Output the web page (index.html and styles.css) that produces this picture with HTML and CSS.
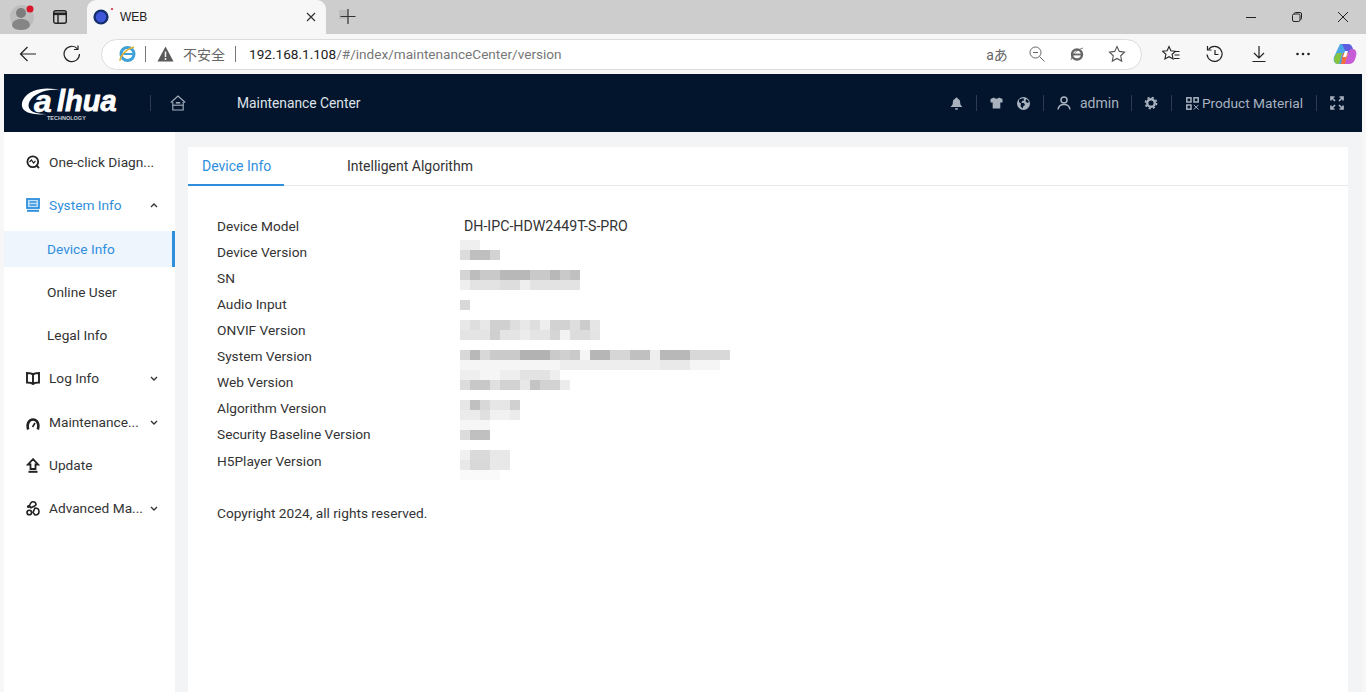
FILE: index.html
```html
<!DOCTYPE html>
<html lang="en">
<head>
<meta charset="utf-8">
<title>WEB</title>
<link rel="stylesheet" href="styles.css">
</head>
<body>
<div class="tabstrip">
  <div class="strip-btn profile">
    <svg width="30" height="30" viewBox="0 0 30 30"><circle cx="15" cy="15" r="12" fill="#bdbdbd"/><circle cx="14" cy="11" r="5" fill="#7d7d7d"/><path d="M5 24c0-5 4-7 9-7s9 2 9 7c-2 3-5 4-9 4s-7-1-9-4z" fill="#858585"/><circle cx="23" cy="7" r="3.5" fill="#d8152a"/></svg>
  </div>
  <div class="strip-btn tabs-btn">
    <svg width="16" height="16" viewBox="0 0 16 16" fill="none" stroke="#222" stroke-width="1.4"><rect x="1.7" y="1.7" width="12.6" height="12.6" rx="2"/><path d="M1.7 4.8h12.6" stroke-width="2.6"/><path d="M6 5v9"/></svg>
  </div>
  <div class="tab">
    <svg class="favicon" width="16" height="16" viewBox="0 0 16 16"><circle cx="8" cy="8" r="6.4" fill="#3f56d8" stroke="#14306e" stroke-width="2.4"/></svg>
    <i class="fav-dot"></i>
    <span class="tab-title">WEB</span>
    <svg width="12" height="12" viewBox="0 0 12 12" stroke="#333" stroke-width="1.2"><path d="M2 2l8 8M10 2l-8 8"/></svg>
  </div>
  <div class="newtab">
    <svg width="18" height="18" viewBox="0 0 18 18"><rect x="0" y="2" width="9" height="9" fill="#bcbcbc"/><path d="M9 1v15M1.500 8.500h15" stroke="#333" stroke-width="1.2"/></svg>
  </div>
  <div class="winctl">
    <span class="win-btn"><svg width="12" height="12" viewBox="0 0 12 12"><path d="M1 6.500h10" stroke="#222" stroke-width="1"/></svg></span>
    <span class="win-btn"><svg width="12" height="12" viewBox="0 0 12 12" fill="none" stroke="#222"><rect x="1.500" y="3" width="7.500" height="7.500" rx="1.500"/><path d="M3.500 3V2.500a1 1 0 0 1 1-1h4.500a1.500 1.500 0 0 1 1.500 1.500V7.500a1 1 0 0 1-1 1"/></svg></span>
    <span class="win-btn"><svg width="12" height="12" viewBox="0 0 12 12" stroke="#222" stroke-width="1"><path d="M1 1l10 10M11 1L1 11"/></svg></span>
  </div>
</div>

<div class="toolbar">
  <span class="tool-btn"><svg width="18" height="18" viewBox="0 0 18 18" fill="none" stroke="#222" stroke-width="1.2"><path d="M17 9H1.500M8.500 2L1.500 9l7 7"/></svg></span>
  <span class="tool-btn"><svg width="18" height="18" viewBox="0 0 18 18" fill="none" stroke="#222" stroke-width="1.2"><path d="M14.500 3.800A7.700 7.700 0 1 0 16.500 9"/><path d="M15 .5v4h-4"/></svg></span>
  <div class="addressbar">
    <svg class="ie" width="18" height="18" viewBox="0 0 18 18"><circle cx="9.500" cy="9" r="6.500" fill="none" stroke="#3ea2d9" stroke-width="3"/><path d="M4 9h11" stroke="#3ea2d9" stroke-width="2"/><path d="M2 16c0-5 6-12 14-14" fill="none" stroke="#e2b23a" stroke-width="1.500"/></svg>
    <i class="addr-sep"></i>
    <svg class="warn" width="17" height="16" viewBox="0 0 17 16"><path d="M8.500 .5L16.500 15.500H.5z" fill="#595959"/><path d="M8.500 5.500v5.500M8.500 12v2" stroke="#f5f5f5" stroke-width="1.500"/></svg>
    <span class="insecure">不安全</span>
    <i class="addr-sep second"></i>
    <span class="url"><b>192.168.1.108</b>/#/index/maintenanceCenter/version</span>
    <span class="addr-tools">
      <span class="addr-tool translate">aあ</span>
      <span class="addr-tool"><svg width="16" height="16" viewBox="0 0 16 16" fill="none" stroke="#666" stroke-width="1"><circle cx="6.500" cy="6.500" r="5.500"/><path d="M4 6.500h5M10.500 10.500l5 5"/></svg></span>
      <span class="addr-tool"><svg width="16" height="16" viewBox="0 0 16 16" fill="none" stroke="#666"><circle cx="8" cy="8.500" r="5" stroke-width="2.400"/><path d="M3 8.500h10" stroke-width="1.800"/><path d="M2 14c1-5 5-10 12-12" stroke-width=".8"/></svg></span>
      <span class="addr-tool"><svg width="18" height="18" viewBox="0 0 18 18" fill="none" stroke="#555" stroke-width="1.100"><path d="M9 1.500l2.300 4.900 5.200.7-3.800 3.700 1 5.300L9 13.500l-4.700 2.600 1-5.300L1.500 7.100l5.200-.7z"/></svg></span>
    </span>
  </div>
  <span class="tool-btn first-right"><svg width="18" height="18" viewBox="0 0 18 18" fill="none" stroke="#222" stroke-width="1.100"><path d="M7 1.500l1.900 4.300 4.600.5-3.400 3 1 4.700L7 11.700l-4.100 2.300 1-4.700L.5 6.300l4.600-.5z"/><path d="M12 6.500h5.500M12.500 10h5M12 13.500h5.500"/></svg></span>
  <span class="tool-btn"><svg width="18" height="18" viewBox="0 0 18 18" fill="none" stroke="#222" stroke-width="1.200"><path d="M2.500 4.500a7.500 7.500 0 1 1-1.400 5"/><path d="M1.500 1v4h4M9 5v4.500h3.500"/></svg></span>
  <span class="tool-btn"><svg width="18" height="18" viewBox="0 0 18 18" fill="none" stroke="#222" stroke-width="1.200"><path d="M9 1v11.500M4 8l5 5 5-5M2.500 16.500h13"/></svg></span>
  <span class="tool-btn"><svg width="18" height="18" viewBox="0 0 18 18" fill="#222"><circle cx="3.500" cy="9" r="1.300"/><circle cx="9" cy="9" r="1.300"/><circle cx="14.500" cy="9" r="1.300"/></svg></span>
  <span class="copilot"><svg width="24" height="24" viewBox="0 0 24 24"><path d="M7 2h8l-4 20H5C1 22 0 18 1 15z" fill="#4aa6e6"/><path d="M9 2h6c3 0 4 2 5 5l-6 6z" fill="#5d5fe0"/><path d="M17 7h3c3 0 4 4 3 7-1 5-3 8-7 8h-5z" fill="#c65cd6"/><path d="M5 22c-3 0-4-3-4-6l3-5h5l-3 11z" fill="#86c440"/><path d="M10 11h5l-3 11H8z" fill="#f3703c"/><path d="M12 9h3l-2 6h-3z" fill="#fff"/></svg></span>
</div>

<div class="app">
  <header class="header">
    <svg class="logo" width="100" height="34" viewBox="0 0 100 34">
      <path d="M40 2.500C28-1.500 8-.5 2 12c-4.500 10 5 16 24 14-15 .5-21-5-17.500-12.500C13 5 28 0 40 2.500z" fill="#fff"/>
      <text class="logo-a" x="13" y="24">a</text>
      <text class="logo-word" x="36" y="23">lhua</text>
      <text class="logo-sub" x="26" y="32">TECHNOLOGY</text>
    </svg>
    <i class="hsep logo-sep"></i>
    <svg class="home" width="16" height="16" viewBox="0 0 16 16" fill="none" stroke="#a8b2bf" stroke-width="1.100"><path d="M.8 7.500L8 1l7.200 6.500"/><path d="M2.800 7v8h10.400V7"/><path d="M2.800 10.200h10.400"/><path d="M5.800 7.800h4.400" stroke-width="1.500"/></svg>
    <span class="title">Maintenance Center</span>
    <div class="hright">
      <svg class="hicon" width="13" height="13" viewBox="0 0 13 13"><path d="M6.500 .5c1 0 1.300.8 1.300 1.200 2 .6 2.400 2.300 2.400 4.300 0 2 1 2.700 2.300 4H.5c1.300-1.300 2.300-2 2.300-4 0-2 .4-3.700 2.400-4.300 0-.4.300-1.200 1.300-1.200zM5 11.200h3c0 1-.6 1.600-1.500 1.600S5 12.200 5 11.200z"/></svg>
      <i class="hsep s1"></i>
      <svg class="hicon" width="13" height="12" viewBox="0 0 13 12"><path d="M4 .5L.5 2v3.500h2.200V11.500h7.600V5.500h2.200V2L9 .5C8.500 2 4.500 2 4 .5z"/></svg>
      <svg class="hicon globe" width="13" height="13" viewBox="0 0 13 13"><path fill-rule="evenodd" d="M6.500 0a6.500 6.500 0 1 1 0 13 6.500 6.500 0 0 1 0-13zM2 2.500L2 5l2 1.500L3.500 9l2 2.500 1-2.500 1.500-1-1-2H4.500L5 4l2-.5L6.500 1zM9 2l-.5 2.500L10.500 6l1.500-1C11.500 3.500 10.500 2.500 9 2z"/></svg>
      <i class="hsep s2"></i>
      <svg class="user" width="14" height="14" viewBox="0 0 14 14" fill="none" stroke="#a8b2bf" stroke-width="1.500"><circle cx="7" cy="4" r="3"/><path d="M1 13.500c.5-3.500 3-5 6-5s5.500 1.500 6 5"/></svg>
      <span class="admin">admin</span>
      <i class="hsep s3"></i>
      <svg class="gear" width="14" height="14" viewBox="0 0 14 14" fill="none" stroke="#a8b2bf"><circle cx="7" cy="7" r="3.800" stroke-width="2.400"/><circle cx="7" cy="7" r="5.600" stroke-width="1.600" stroke-dasharray="2.200 2.200"/></svg>
      <i class="hsep s4"></i>
      <svg class="qr" width="13" height="13" viewBox="0 0 13 13" fill="none" stroke="#a8b2bf" stroke-width="1.500"><rect x=".8" y=".8" width="4.200" height="4.200"/><rect x="8" y=".8" width="4.200" height="4.200"/><rect x=".8" y="8" width="4.200" height="4.200"/><path d="M7.800 7.800l4.700 4.700M12.500 7.800l-4.700 4.700" stroke-width="1"/></svg>
      <span class="material">Product Material</span>
      <i class="hsep s5"></i>
      <svg class="full" width="14" height="14" viewBox="0 0 14 14" fill="none" stroke="#a8b2bf" stroke-width="1.700"><path d="M1 4.500V1h3.500M1 1l4 4M13 4.500V1H9.500M13 1L9 5M1 9.500V13h3.500M1 13l4-4M13 9.500V13H9.500M13 13L9 9"/></svg>
    </div>
  </header>

  <div class="main">
    <nav class="sidebar">
      <div class="nav-item">
        <svg class="nav-icon" width="14" height="14" viewBox="0 0 14 14" fill="none" stroke="#222" stroke-width="1.800"><circle cx="6.800" cy="6.800" r="5.400"/><path d="M3.500 7l2-2 2 3 2-2" stroke-width="1.200"/><path d="M10.500 10.500l2.500 2.500"/></svg>
        <span class="nav-label">One-click Diagn...</span>
      </div>
      <div class="nav-item active">
        <svg class="nav-icon" width="14" height="14" viewBox="0 0 14 14" fill="none" stroke="#2f8fdc" stroke-width="1.800"><rect x="1" y="1" width="12" height="9" fill="#bfe0f8"/><path d="M3.500 4h7M3.500 7h7" stroke-width="1.300"/><path d="M1 12.800h12" stroke-width="2"/></svg>
        <span class="nav-label">System Info</span>
        <svg class="chev" width="8" height="5" viewBox="0 0 8 5" fill="none" stroke="#333" stroke-width="1.400"><path d="M1 4l3-3 3 3"/></svg>
      </div>
      <div class="nav-item sub selected"><span class="nav-label">Device Info</span></div>
      <div class="nav-item sub"><span class="nav-label">Online User</span></div>
      <div class="nav-item sub"><span class="nav-label">Legal Info</span></div>
      <div class="nav-item">
        <svg class="nav-icon" width="14" height="13" viewBox="0 0 14 13" fill="none" stroke="#222" stroke-width="1.900"><path d="M7 2.500C5.500 1 3 1 1 1v9.500c2 0 4.500 0 6 1.500 1.500-1.500 4-1.500 6-1.500V1c-2 0-4.500 0-6 1.500zM7 2.500V12"/></svg>
        <span class="nav-label">Log Info</span>
        <svg class="chev" width="8" height="5" viewBox="0 0 8 5" fill="none" stroke="#333" stroke-width="1.400"><path d="M1 1l3 3 3-3"/></svg>
      </div>
      <div class="nav-item">
        <svg class="nav-icon drop" width="14" height="12" viewBox="0 0 14 12" fill="none" stroke="#222" stroke-width="2.600"><path d="M2.200 11.500C.5 6 3 1.500 7 1.500s6.500 4.500 4.800 10"/><path d="M6.500 9L9 5" stroke-width="1.600"/></svg>
        <span class="nav-label">Maintenance...</span>
        <svg class="chev" width="8" height="5" viewBox="0 0 8 5" fill="none" stroke="#333" stroke-width="1.400"><path d="M1 1l3 3 3-3"/></svg>
      </div>
      <div class="nav-item">
        <svg class="nav-icon" width="14" height="15" viewBox="0 0 14 15"><path d="M7 1.200L12 6.500H9.500V11H4.500V6.500H2z" fill="none" stroke="#222" stroke-width="1.800"/><path d="M2.500 13.800h9" stroke="#222" stroke-width="2"/></svg>
        <span class="nav-label">Update</span>
      </div>
      <div class="nav-item">
        <svg class="nav-icon" width="14" height="15" viewBox="0 0 14 15" fill="none" stroke="#222" stroke-width="1.600"><circle cx="3.300" cy="11.500" r="2.300"/><path d="M7 .8c2 0 3 1.500 3 3l-2 1.500L5 6.800 3.500 5C4 3 5 .8 7 .8zM9 7c2.500 0 4 1.500 4 3.500 0 2.300-2 3.500-4 3.500L7 11.500z"/><circle cx="2.500" cy="5.500" r=".8"/></svg>
        <span class="nav-label">Advanced Ma...</span>
        <svg class="chev" width="8" height="5" viewBox="0 0 8 5" fill="none" stroke="#333" stroke-width="1.400"><path d="M1 1l3 3 3-3"/></svg>
      </div>
    </nav>

    <section class="content">
      <div class="card">
        <div class="tabs">
          <span class="ctab current">Device Info</span>
          <span class="ctab">Intelligent Algorithm</span>
        </div>
        <div class="info">
          <span>Device Model</span><span class="val">DH-IPC-HDW2449T-S-PRO</span>
          <span>Device Version</span><span></span>
          <span>SN</span><span></span>
          <span>Audio Input</span><span></span>
          <span>ONVIF Version</span><span></span>
          <span>System Version</span><span></span>
          <span>Web Version</span><span></span>
          <span>Algorithm Version</span><span></span>
          <span>Security Baseline Version</span><span></span>
          <span class="last">H5Player Version</span><span class="last"></span>
        </div>
        <p class="copyright">Copyright 2024, all rights reserved.</p>
        <svg class="mosaic" width="270" height="240" viewBox="0 0 270 240" shape-rendering="crispEdges">
          <g fill="#efefef"><rect x="0" y="0" width="20" height="10"/></g>
          <rect x="0" y="10" width="10" height="10" fill="#dcdcdc"/><rect x="10" y="10" width="20" height="10" fill="#bfbfbf"/><rect x="30" y="10" width="10" height="10" fill="#d3d3d3"/>

          <rect x="0" y="30" width="120" height="10" fill="#c9c9c9"/><rect x="0" y="30" width="10" height="10" fill="#d5d5d5"/><rect x="10" y="30" width="10" height="10" fill="#bdbdbd"/><rect x="40" y="30" width="30" height="10" fill="#b8b8b8"/><rect x="90" y="30" width="10" height="10" fill="#b8b8b8"/><rect x="110" y="30" width="10" height="10" fill="#c0c0c0"/>
          <rect x="0" y="40" width="120" height="10" fill="#e3e3e3"/><rect x="0" y="40" width="10" height="10" fill="#efefef"/><rect x="40" y="40" width="20" height="10" fill="#dddddd"/><rect x="60" y="40" width="10" height="10" fill="#eeeeee"/>

          <rect x="0" y="60" width="10" height="10" fill="#d8d8d8"/>

          <rect x="0" y="80" width="140" height="10" fill="#dedede"/><rect x="0" y="80" width="10" height="10" fill="#e8e8e8"/><rect x="20" y="80" width="10" height="10" fill="#e8e8e8"/><rect x="30" y="80" width="20" height="10" fill="#d0d0d0"/><rect x="60" y="80" width="10" height="10" fill="#e8e8e8"/><rect x="80" y="80" width="10" height="10" fill="#eeeeee"/><rect x="90" y="80" width="20" height="10" fill="#d2d2d2"/><rect x="120" y="80" width="10" height="10" fill="#cccccc"/><rect x="130" y="80" width="10" height="10" fill="#e5e5e5"/>
          <rect x="0" y="90" width="140" height="10" fill="#e4e4e4"/><rect x="30" y="90" width="10" height="10" fill="#d0d0d0"/><rect x="60" y="90" width="10" height="10" fill="#ececec"/><rect x="90" y="90" width="10" height="10" fill="#d5d5d5"/><rect x="100" y="90" width="10" height="10" fill="#f2f2f2"/><rect x="110" y="90" width="20" height="10" fill="#dcdcdc"/>

          <rect x="0" y="110" width="270" height="10" fill="#cacaca"/><rect x="0" y="110" width="10" height="10" fill="#d8d8d8"/><rect x="10" y="110" width="10" height="10" fill="#b8b8b8"/><rect x="20" y="110" width="10" height="10" fill="#d8d8d8"/><rect x="60" y="110" width="30" height="10" fill="#b2b2b2"/><rect x="100" y="110" width="10" height="10" fill="#d0d0d0"/><rect x="120" y="110" width="10" height="10" fill="#f5f5f5"/><rect x="130" y="110" width="20" height="10" fill="#b6b6b6"/><rect x="150" y="110" width="20" height="10" fill="#d6d6d6"/><rect x="170" y="110" width="20" height="10" fill="#c0c0c0"/><rect x="190" y="110" width="10" height="10" fill="#eeeeee"/><rect x="200" y="110" width="30" height="10" fill="#b8b8b8"/><rect x="230" y="110" width="40" height="10" fill="#d8d8d8"/>
          <rect x="0" y="120" width="260" height="10" fill="#f5f5f5"/><rect x="100" y="120" width="100" height="10" fill="#eeeeee"/><rect x="200" y="120" width="30" height="10" fill="#e9e9e9"/>
          <rect x="0" y="130" width="100" height="10" fill="#eeeeee"/><rect x="20" y="130" width="20" height="10" fill="#f5f5f5"/><rect x="60" y="130" width="30" height="10" fill="#e3e3e3"/>
          <rect x="0" y="140" width="110" height="10" fill="#d2d2d2"/><rect x="0" y="140" width="10" height="10" fill="#dcdcdc"/><rect x="10" y="140" width="20" height="10" fill="#c8c8c8"/><rect x="30" y="140" width="10" height="10" fill="#e0e0e0"/><rect x="60" y="140" width="10" height="10" fill="#e8e8e8"/><rect x="70" y="140" width="10" height="10" fill="#c4c4c4"/><rect x="100" y="140" width="10" height="10" fill="#ececec"/>

          <rect x="0" y="160" width="60" height="10" fill="#e6e6e6"/><rect x="10" y="160" width="10" height="10" fill="#c0c0c0"/><rect x="20" y="160" width="10" height="10" fill="#d8d8d8"/><rect x="50" y="160" width="10" height="10" fill="#d0d0d0"/>
          <rect x="0" y="170" width="60" height="10" fill="#ebebeb"/><rect x="20" y="170" width="10" height="10" fill="#e0e0e0"/><rect x="30" y="170" width="20" height="10" fill="#f1f1f1"/>
          <rect x="0" y="180" width="30" height="10" fill="#f6f6f6"/>
          <rect x="0" y="190" width="30" height="10" fill="#c0c0c0"/><rect x="0" y="190" width="10" height="10" fill="#dcdcdc"/>

          <rect x="0" y="210" width="50" height="10" fill="#e8e8e8"/><rect x="0" y="210" width="10" height="10" fill="#f0f0f0"/><rect x="10" y="210" width="20" height="10" fill="#dadada"/>
          <rect x="0" y="220" width="50" height="10" fill="#e8e8e8"/><rect x="10" y="220" width="20" height="10" fill="#d8d8d8"/>
          <rect x="0" y="230" width="40" height="10" fill="#fafafa"/>
        </svg>
      </div>
    </section>
  </div>
</div>
</body>
</html>
```
FILE: styles.css
```css
* { box-sizing: border-box; }
html, body { margin: 0; height: 100%; overflow: hidden; }
body {
  background: #f7f7f7;
  font-family: Roboto, "Noto Sans CJK SC", sans-serif;
  font-size: 14px;
  color: #333;
}
svg { display: block; flex: none; }
i { display: block; flex: none; }

.tabstrip { height: 34px; background: #cdcdcd; display: flex; align-items: center; position: relative; }
.strip-btn { display: flex; justify-content: center; align-items: center; flex: none; }
.profile { width: 30px; margin-left: 7px; }
.tabs-btn { width: 16px; margin-left: 15px; }
.tab {
  width: 239px; height: 34px; margin-left: 19px; background: #f7f7f7;
  border-radius: 9px 9px 0 0; display: flex; align-items: center; padding: 0 9px 0 6px; position: relative; flex: none;
}
.fav-dot { position: absolute; left: 24px; top: 8px; width: 2px; height: 2px; border-radius: 50%; background: #d8152a; }
.tab-title { margin-left: 11px; flex: 1; font-family: "Liberation Sans", sans-serif; font-size: 12px; color: #222; }
.newtab { margin-left: 13px; }
.winctl { margin-left: auto; display: flex; }
.win-btn { width: 46px; display: flex; justify-content: center; align-items: center; }

.toolbar { height: 40px; display: flex; align-items: center; padding-left: 6px; }
.tool-btn { width: 44px; display: flex; justify-content: center; align-items: center; flex: none; }
.first-right { margin-left: 7px; }
.addressbar {
  width: 1041px; height: 31px; margin-left: 7px; flex: none; background: #fff; border: 1px solid #dcdcdc;
  border-radius: 16px; display: flex; align-items: center; padding-left: 15px;
}
.ie { margin-left: 1px; }
.addr-sep { width: 1px; height: 16px; background: #777; margin-left: 9px; }
.warn { margin-left: 11px; }
.insecure { margin-left: 9px; font-size: 14px; color: #666; width: 42px; white-space: nowrap; }
.addr-sep.second { margin-left: 10px; }
.url { margin-left: 13px; font-size: 13.600px; color: #777; white-space: nowrap; }
.url b { font-weight: 400; color: #222; }
.addr-tools { margin-left: auto; display: flex; margin-right: 4px; }
.addr-tool { width: 40px; display: flex; justify-content: center; align-items: center; }
.translate { font-size: 14px; color: #666; }
.copilot { width: 24px; margin-left: 8px; }

.app { margin: 0 4px; height: 618px; display: flex; flex-direction: column; }
.header { height: 58px; background: #03152d; display: flex; align-items: center; flex: none; color: #a8b2bf; }
.logo { margin-left: 17px; margin-top: 3px; overflow: visible; }
.logo-a { font-family: "Liberation Sans", sans-serif; font-weight: 700; font-style: italic; font-size: 32px; fill: #fff; stroke: #fff; stroke-width: .6px; }
.logo-word { font-family: "Liberation Sans", sans-serif; font-weight: 700; font-style: italic; font-size: 29px; fill: #fff; stroke: #fff; stroke-width: .8px; }
.logo-sub { font-family: "Liberation Sans", sans-serif; font-weight: 700; font-size: 5.500px; fill: #c9ced6; }
.hsep { width: 1px; height: 16px; background: #2c3b50; }
.logo-sep { margin-left: 29px; }
.home { margin-left: 19px; }
.title { margin-left: 51px; color: #dfe3e8; font-size: 13.800px; white-space: nowrap; }
.hright { margin-left: auto; display: flex; align-items: center; margin-right: 18px; }
.hicon { fill: #a8b2bf; }
.s1 { margin-left: 13px; }
.s1 + .hicon { margin-left: 13px; }
.globe { margin-left: 14px; }
.s2 { margin-left: 13px; }
.user { margin-left: 13px; }
.admin { margin-left: 9px; font-size: 14px; }
.s3 { margin-left: 12px; }
.gear { margin-left: 12px; }
.s4 { margin-left: 13px; }
.qr { margin-left: 14px; }
.material { margin-left: 3px; font-size: 13.700px; white-space: nowrap; }
.s5 { margin-left: 13px; }
.full { margin-left: 13px; }

.main { flex: 1; display: flex; min-height: 0; }
.sidebar {
  width: 171px; background: #fff; padding-top: 12px; display: flex; flex-direction: column; gap: 7.300px; flex: none;
}
.nav-item { height: 36px; display: flex; align-items: center; padding-left: 22px; position: relative; color: #333; font-size: 13.700px; flex: none; }
.nav-icon { width: 14px; }
.drop { margin-top: 5px; }
.nav-label { margin-left: 9px; white-space: nowrap; }
.chev { position: absolute; left: 146px; top: 16px; }
.nav-item.active { color: #2f8fdc; }
.nav-item.sub { padding-left: 34px; }
.nav-item.selected { background: #eef5fd; color: #2f8fdc; border-right: 3px solid #2f8fdc; }

.content { flex: 1; background: #f3f4f6; padding: 15px 14px 0 13px; min-width: 0; }
.card { background: #fff; height: 100%; position: relative; }
.tabs { height: 39px; border-bottom: 1px solid #e8e8e8; display: flex; }
.ctab { width: 96px; padding-left: 14px; line-height: 38px; font-size: 14px; color: #333; white-space: nowrap; margin-right: 49px; }
.ctab.current { color: #2f8fdc; height: 39px; border-bottom: 2px solid #2f8fdc; }
.info { display: grid; grid-template-columns: 247px 1fr; grid-auto-rows: 26px; padding: 27px 0 0 29px; font-size: 13.700px; line-height: 26px; }
.info .last { margin-top: 1px; }
.val { color: #333; font-size: 14.200px; }
.copyright { margin: 27px 0 0 29px; font-size: 13.700px; line-height: 26px; }
.mosaic { position: absolute; left: 272px; top: 93px; }
```
